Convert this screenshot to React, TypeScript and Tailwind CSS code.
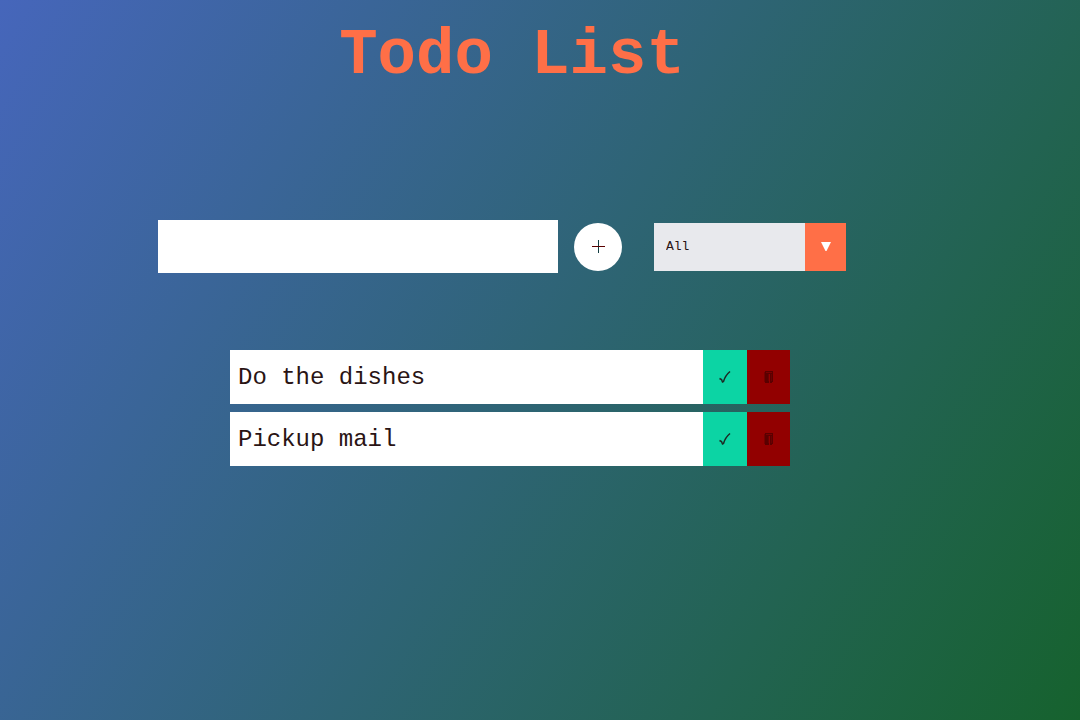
import { useState } from "react";
import type { FormEvent } from "react";

type Todo = { id: number; text: string; done: boolean };

function CheckIcon() {
  return (
    <svg width="14" height="14" viewBox="0 0 14 14" aria-hidden="true">
      <path
        d="M1.500 8.500 L3.500 9.500 L4.500 12 L5.500 11.500 C6.500 8 9 4 12 1.500"
        fill="none"
        stroke="#1c2a24"
        strokeWidth="1.500"
      />
    </svg>
  );
}

function TrashIcon() {
  return (
    <svg width="10" height="12" viewBox="0 0 10 12" aria-hidden="true">
      <path d="M1 0H9V11H8V12H6V3H5V12H1V11H0.500V1H1Z" fill="#5a0000" />
      <path d="M2 1H8V2H2Z" fill="#7c0000" />
      <path d="M4 3H5V10H4Z M7 3H8V10H7Z" fill="#6c0000" />
    </svg>
  );
}

export default function App() {
  const [todos, setTodos] = useState<Todo[]>([
    { id: 1, text: "Do the dishes", done: false },
    { id: 2, text: "Pickup mail", done: false },
  ]);
  const [text, setText] = useState("");
  const [filter, setFilter] = useState("all");

  const addTodo = (event: FormEvent) => {
    event.preventDefault();
    if (!text.trim()) return;
    setTodos([...todos, { id: Date.now(), text, done: false }]);
    setText("");
  };

  const shown = todos.filter(
    (todo) => filter === "all" || (filter === "completed") === todo.done,
  );

  return (
    <div className="min-h-screen bg-[linear-gradient(120deg,#4666bb,#16622e)] pr-[60px] font-['Liberation_Mono','Courier_New',monospace] text-[#2a1414]">
      <header className="flex justify-center pt-5 pl-1">
        <h1 className="text-[64px] leading-[72px] font-bold text-[#ff6f47]">Todo List</h1>
      </header>

      <main>
        <form onSubmit={addTodo} className="mt-32 flex items-center justify-center pr-4">
          <input
            type="text"
            aria-label="New todo"
            value={text}
            onChange={(e) => setText(e.target.value)}
            className="h-[53px] w-[400px] bg-white px-2 text-2xl outline-none"
          />
          <button
            type="submit"
            aria-label="Add todo"
            className="ml-4 flex size-12 items-center justify-center rounded-full bg-white"
          >
            <svg width="14" height="14" viewBox="0 0 14 14" aria-hidden="true">
              <path d="M7 0H8V13H7Z" fill="#123c40" />
              <path d="M1 6H14V7H1Z" fill="#5a0000" />
            </svg>
          </button>
          <div className="relative ml-8 w-48">
            <select
              aria-label="Filter todos"
              value={filter}
              onChange={(e) => setFilter(e.target.value)}
              className="block h-12 w-full appearance-none bg-[#e8e9ed] pr-12 pl-3 text-[13px] outline-none"
            >
              <option value="all">All</option>
              <option value="completed">Completed</option>
              <option value="uncompleted">Uncompleted</option>
            </select>
            <span className="pointer-events-none absolute inset-y-0 right-0 flex w-[41px] items-center justify-center bg-[#ff6f47]">
              <svg width="10" height="9" viewBox="0 0 10 9" aria-hidden="true">
                <path d="M0 0H10L5.500 9H4.500Z" fill="#ffffff" />
              </svg>
            </span>
          </div>
        </form>

        <ul className="mx-auto mt-[77px] flex w-[560px] flex-col gap-2">
          {shown.map((todo) => (
            <li key={todo.id} className="flex h-[54px] bg-white">
              <span className={`flex-1 px-2 text-2xl leading-[56px] ${todo.done ? "line-through opacity-50" : ""}`}>
                {todo.text}
              </span>
              <button
                type="button"
                aria-label={`Complete ${todo.text}`}
                onClick={() =>
                  setTodos(todos.map((t) => (t.id === todo.id ? { ...t, done: !t.done } : t)))
                }
                className="flex w-11 items-center justify-center bg-[#0cd4a4]"
              >
                <CheckIcon />
              </button>
              <button
                type="button"
                aria-label={`Delete ${todo.text}`}
                onClick={() => setTodos(todos.filter((t) => t.id !== todo.id))}
                className="flex w-[43px] items-center justify-center bg-[#920000]"
              >
                <TrashIcon />
              </button>
            </li>
          ))}
        </ul>
      </main>
    </div>
  );
}
